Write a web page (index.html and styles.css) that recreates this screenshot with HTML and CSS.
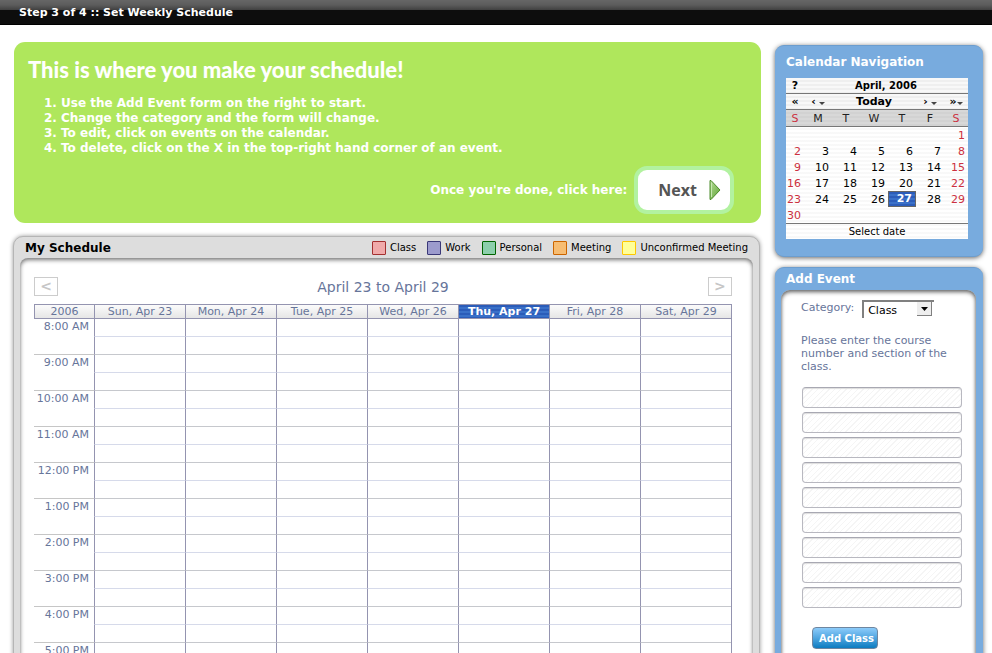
FILE: index.html
```html
<!DOCTYPE html>
<html lang="en">
<head>
<meta charset="utf-8">
<title>Set Weekly Schedule</title>
<link rel="stylesheet" href="styles.css">
</head>
<body>
<header class="topbar">Step 3 of 4 :: Set Weekly Schedule</header>
<div class="layout">
  <main class="main">
    <section class="intro">
      <h1>This is where you make your schedule!</h1>
      <ol>
        <li>Use the Add Event form on the right to start.</li>
        <li>Change the category and the form will change.</li>
        <li>To edit, click on events on the calendar.</li>
        <li>To delete, click on the X in the top-right hand corner of an event.</li>
      </ol>
      <div class="next-row">
        <span>Once you're done, click here:</span>
        <button type="button" class="next">Next
          <svg width="12" height="22" viewBox="0 0 12 22" aria-hidden="true">
            <defs><linearGradient id="leaf" x1="0" y1="0" x2="1" y2="1"><stop offset="0" stop-color="#b5dd95"/><stop offset="1" stop-color="#5ea336"/></linearGradient></defs>
            <path d="M1 1.500 H2 L11 11 L2 20.500 H1 Z" fill="url(#leaf)" stroke="#4d8c2c"/>
            <path d="M2.500 3.500 V18" stroke="#c8e8b2" fill="none"/>
          </svg>
        </button>
      </div>
    </section>

    <section class="schedule">
      <div class="schedule-head">
        <h2>My Schedule</h2>
        <ul class="legend">
          <li><i class="sw class"></i>Class</li>
          <li><i class="sw work"></i>Work</li>
          <li><i class="sw personal"></i>Personal</li>
          <li><i class="sw meeting"></i>Meeting</li>
          <li><i class="sw unconfirmed"></i>Unconfirmed Meeting</li>
        </ul>
      </div>
      <div class="schedule-body">
        <div class="week-nav">
          <button type="button" aria-label="Previous week">&lt;</button>
          <span>April 23 to April 29</span>
          <button type="button" aria-label="Next week">&gt;</button>
        </div>
        <table class="week">
          <colgroup><col class="time-col"><col span="7"></colgroup>
          <thead>
            <tr><th class="year">2006</th><th>Sun, Apr 23</th><th>Mon, Apr 24</th><th>Tue, Apr 25</th><th>Wed, Apr 26</th><th class="today">Thu, Apr 27</th><th>Fri, Apr 28</th><th>Sat, Apr 29</th></tr>
          </thead>
          <tbody>
            <tr class="half"><th rowspan="2">8:00 AM</th><td></td><td></td><td></td><td></td><td></td><td></td><td></td></tr>
            <tr><td></td><td></td><td></td><td></td><td></td><td></td><td></td></tr>
            <tr class="half"><th rowspan="2">9:00 AM</th><td></td><td></td><td></td><td></td><td></td><td></td><td></td></tr>
            <tr><td></td><td></td><td></td><td></td><td></td><td></td><td></td></tr>
            <tr class="half"><th rowspan="2">10:00 AM</th><td></td><td></td><td></td><td></td><td></td><td></td><td></td></tr>
            <tr><td></td><td></td><td></td><td></td><td></td><td></td><td></td></tr>
            <tr class="half"><th rowspan="2">11:00 AM</th><td></td><td></td><td></td><td></td><td></td><td></td><td></td></tr>
            <tr><td></td><td></td><td></td><td></td><td></td><td></td><td></td></tr>
            <tr class="half"><th rowspan="2">12:00 PM</th><td></td><td></td><td></td><td></td><td></td><td></td><td></td></tr>
            <tr><td></td><td></td><td></td><td></td><td></td><td></td><td></td></tr>
            <tr class="half"><th rowspan="2">1:00 PM</th><td></td><td></td><td></td><td></td><td></td><td></td><td></td></tr>
            <tr><td></td><td></td><td></td><td></td><td></td><td></td><td></td></tr>
            <tr class="half"><th rowspan="2">2:00 PM</th><td></td><td></td><td></td><td></td><td></td><td></td><td></td></tr>
            <tr><td></td><td></td><td></td><td></td><td></td><td></td><td></td></tr>
            <tr class="half"><th rowspan="2">3:00 PM</th><td></td><td></td><td></td><td></td><td></td><td></td><td></td></tr>
            <tr><td></td><td></td><td></td><td></td><td></td><td></td><td></td></tr>
            <tr class="half"><th rowspan="2">4:00 PM</th><td></td><td></td><td></td><td></td><td></td><td></td><td></td></tr>
            <tr><td></td><td></td><td></td><td></td><td></td><td></td><td></td></tr>
            <tr class="half"><th rowspan="2">5:00 PM</th><td></td><td></td><td></td><td></td><td></td><td></td><td></td></tr>
            <tr><td></td><td></td><td></td><td></td><td></td><td></td><td></td></tr>
          </tbody>
        </table>
      </div>
    </section>
  </main>

  <aside class="side">
    <section class="card nav-card">
      <h2>Calendar Navigation</h2>
      <table class="month">
        <colgroup><col class="c-sun"><col span="5"><col class="c-sat"></colgroup>
        <thead>
          <tr class="bar"><th>?</th><th colspan="6" class="small">April, 2006</th></tr>
          <tr class="bar"><th>«</th><th>‹<i class="caret"></i></th><th colspan="3">Today</th><th>›<i class="caret"></i></th><th>»<i class="caret tight"></i></th></tr>
          <tr class="days"><th class="we">S</th><th>M</th><th>T</th><th>W</th><th>T</th><th>F</th><th class="we">S</th></tr>
        </thead>
        <tbody>
          <tr><td></td><td></td><td></td><td></td><td></td><td></td><td class="we">1</td></tr>
          <tr><td class="we">2</td><td>3</td><td>4</td><td>5</td><td>6</td><td>7</td><td class="we">8</td></tr>
          <tr><td class="we">9</td><td>10</td><td>11</td><td>12</td><td>13</td><td>14</td><td class="we">15</td></tr>
          <tr><td class="we">16</td><td>17</td><td>18</td><td>19</td><td>20</td><td>21</td><td class="we">22</td></tr>
          <tr><td class="we">23</td><td>24</td><td>25</td><td>26</td><td class="picked">27</td><td>28</td><td class="we">29</td></tr>
          <tr><td class="we">30</td><td></td><td></td><td></td><td></td><td></td><td></td></tr>
        </tbody>
        <tfoot><tr><td colspan="7" class="small">Select date</td></tr></tfoot>
      </table>
    </section>

    <section class="card event-card">
      <h2>Add Event</h2>
      <form class="event-form">
        <div class="category">
          <label for="category">Category:</label>
          <span class="select-box">
            <select id="category"><option>Class</option><option>Work</option><option>Personal</option><option>Meeting</option></select>
            <svg width="15" height="14" viewBox="0 0 15 14" aria-hidden="true"><path d="M0 0H15V14H0Z" fill="#808080"/><path d="M0 0H14V13H0Z" fill="#eee"/><path d="M4 5H11L7.500 9Z" fill="#000"/></svg>
          </span>
        </div>
        <p>Please enter the course number and section of the class.</p>
        <div class="fields">
          <input type="text" aria-label="Course 1">
          <input type="text" aria-label="Course 2">
          <input type="text" aria-label="Course 3">
          <input type="text" aria-label="Course 4">
          <input type="text" aria-label="Course 5">
          <input type="text" aria-label="Course 6">
          <input type="text" aria-label="Course 7">
          <input type="text" aria-label="Course 8">
          <input type="text" aria-label="Course 9">
        </div>
        <button type="button" class="add">Add Class</button>
      </form>
    </section>
  </aside>
</div>
</body>
</html>
```
FILE: styles.css
```css
* { box-sizing: border-box; }

body {
  margin: 0;
  height: 100vh;
  overflow: hidden;
  background: #fff;
  font-family: "DejaVu Sans", Verdana, sans-serif;
  font-size: 11px;
  color: #67759a;
}

h1, h2, p, ol, ul { margin: 0; padding: 0; }
table { border-collapse: separate; border-spacing: 0; table-layout: fixed; width: 100%; }
th, td { padding: 0; font-weight: normal; }
button, input, select { font-family: inherit; margin: 0; }

.topbar {
  height: 25px;
  padding: 1px 0 0 19px;
  line-height: 23px;
  color: #fff;
  font-weight: bold;
  border-bottom: 1px solid #000;
  background: linear-gradient(#666 0, #5c5c5c 5px, #404040 10px, #0d0d0d 10px);
}

.layout {
  display: grid;
  grid-template-columns: minmax(0, 1fr) 208px;
  gap: 14px;
  padding: 17px 9px 0 14px;
}

/* Instructions */
.intro {
  padding: 14px 27px 9px 14px;
  background: #afe75c;
  border-radius: 11px;
  color: #fff;
  font-size: 12px;
  font-weight: bold;
}
.intro h1 {
  font-family: Lato, "Century Gothic", sans-serif;
  font-size: 22px;
  font-weight: 900;
  line-height: 28px;
}
.intro ol {
  margin-top: 12px;
  padding-left: 33px;
  line-height: 15px;
}
.next-row {
  display: flex;
  justify-content: flex-end;
  align-items: center;
  gap: 7px;
  margin-top: 10px;
}
.next {
  display: flex;
  align-items: center;
  gap: 12px;
  height: 48px;
  padding: 0 9px 0 20px;
  border: 4px solid #b2f2a0;
  border-radius: 13px;
  background: #fff;
  color: #555;
  font-family: "Open Sans", sans-serif;
  font-size: 16px;
  font-weight: bold;
}

/* Weekly schedule */
.schedule {
  margin: 13px 1px 0 -1px;
  padding: 0 6px 6px;
  border: 1px solid #b5b5b5;
  border-radius: 10px;
  background: #ddd;
  box-shadow: 0 0 4px #999;
}
.schedule-head {
  display: flex;
  justify-content: space-between;
  align-items: center;
  height: 21px;
  padding: 0 5px;
}
.schedule-head h2 { font-size: 12px; color: #000; }
.legend {
  display: flex;
  gap: 11px;
  list-style: none;
  font-size: 10px;
  color: #000;
}
.legend li { display: flex; align-items: center; gap: 4px; }
.sw { width: 14px; height: 14px; border: 1px solid; border-radius: 1px; }
.sw.class { background: #f0aaaa; border-color: #a33030; }
.sw.work { background: #9c9bcd; border-color: #3a3878; }
.sw.personal { background: #8ccfab; border-color: #006400; }
.sw.meeting { background: #f7bd73; border-color: #cc6500; }
.sw.unconfirmed { background: #ffff99; border-color: #ffc800; }

.schedule-body {
  padding: 19px 21px 30px 14px;
  border-radius: 8px;
  background: #fff;
  box-shadow: inset 0 2px 4px #777, inset 0 0 2px #ccc;
}
.week-nav { display: flex; justify-content: space-between; align-items: center; font-size: 14px; }
.week-nav button {
  width: 24px;
  height: 19px;
  padding: 0;
  border: 1px solid #ccc;
  background: #fff;
  color: #c6c6c6;
  font-size: 14px;
  font-weight: bold;
  line-height: 17px;
}
.week { margin-top: 8px; border-right: 1px solid #9494b0; }
.time-col { width: 60px; }
.week thead th {
  height: 15px;
  line-height: 13px;
  border: solid #9494b0;
  border-width: 1px 0 1px 1px;
  background: linear-gradient(#fbfbfb, #e6e6e6);
}
.week thead .today {
  color: #fff;
  font-weight: bold;
  background: repeating-linear-gradient(#2b5cb9 0, #2b5cb9 2px, #3a70c8 2px, #3a70c8 4px);
}
.week tbody th {
  height: 36px;
  padding-right: 5px;
  border-bottom: 1px solid #c6c6c6;
  line-height: 15px;
  text-align: right;
  vertical-align: top;
}
.week td { height: 18px; border-left: 1px solid #9494b0; border-bottom: 1px solid #c6c8cd; }
.week .half td { border-bottom-color: #d6daea; }

/* Sidebar */
.side { padding-top: 3px; }
.card {
  padding: 0 7px 0 6px;
  border: 1px solid #6c9dce;
  border-width: 1px 0;
  border-radius: 9px;
  background: #78abde;
  box-shadow: 0 1px 5px #666;
}
.card h2 { padding-left: 5px; color: #fff; font-size: 12px; }
.nav-card { padding: 0 15px 17px 11px; }
.nav-card h2 { padding-left: 0; line-height: 32px; }
.event-card { margin-top: 10px; padding-bottom: 8px; }
.event-card h2 { line-height: 22px; }

.month {
  background: repeating-linear-gradient(#fff 0, #fff 2px, #f2f2f2 3px, #fff 4px);
  color: #000;
  line-height: 15px;
}
.c-sun { width: 18px; }
.c-sat { width: 24px; }
.month th { height: 16px; text-align: center; border-bottom: 1px solid #777; white-space: nowrap; }
.month .bar th { font-weight: bold; background: repeating-linear-gradient(#f8f8f8 0, #f8f8f8 2px, #e6e6e6 3px, #f8f8f8 4px); }
.month .days th { height: 17px; background: repeating-linear-gradient(#d8d8d8 0, #d8d8d8 2px, #ccc 3px, #d8d8d8 4px); }
.month .days { color: #222; }
.month td { height: 16px; padding-right: 3px; text-align: right; }
.month .we { color: #cc3040; }
.month .small { font-size: 10px; }
.month .picked {
  border: 1px solid #666;
  background: repeating-linear-gradient(#2b5cb9 0, #2b5cb9 2px, #3a70c8 2px, #3a70c8 4px);
  color: #fff;
  font-weight: bold;
  line-height: 14px;
}
.month tfoot td { border-top: 1px solid #777; padding: 0; text-align: center; }
.caret {
  display: inline-block;
  margin-left: 3px;
  border: solid transparent;
  border-width: 3px 3px 0;
  border-top-color: #444;
}
.caret.tight { margin-left: 0; }

.event-form {
  padding: 10px 14px 40px 20px;
  border-radius: 9px;
  background: #fff;
  box-shadow: inset 0 2px 4px #666, inset 0 0 3px #aaa;
}
.category { display: flex; gap: 8px; line-height: 15px; }
.select-box { position: relative; }
.select-box select {
  display: block;
  width: 72px;
  height: 18px;
  padding: 0 4px;
  appearance: none;
  border: solid #808080;
  border-width: 2px 0 0 2px;
  border-radius: 0;
  background: #fff;
  color: #000;
  font-size: 11px;
}
.select-box svg { position: absolute; top: 2px; right: 2px; pointer-events: none; }
.event-form p { margin-top: 16px; line-height: 13px; }
.fields { display: grid; gap: 4px; margin-top: 14px; padding-left: 1px; }
.fields input {
  width: 100%;
  height: 21px;
  border: 1px solid #b8b8c0;
  border-top-color: #a8a8b2;
  border-radius: 4px;
  background: repeating-linear-gradient(135deg, #fff 0, #fff 3px, #f5f5f5 3px, #f5f5f5 4px);
  box-shadow: inset 0 1px 1px #ddd;
}
.add {
  display: block;
  height: 22px;
  margin: 19px 0 0 11px;
  padding: 0 3px 0 6px;
  border: 1px solid #6e86a0;
  border-radius: 4px;
  background: linear-gradient(#8ccbfa, #4fa5e0 50%, #0d7cc0);
  color: #fff;
  font-size: 10px;
  font-weight: bold;
}
```
